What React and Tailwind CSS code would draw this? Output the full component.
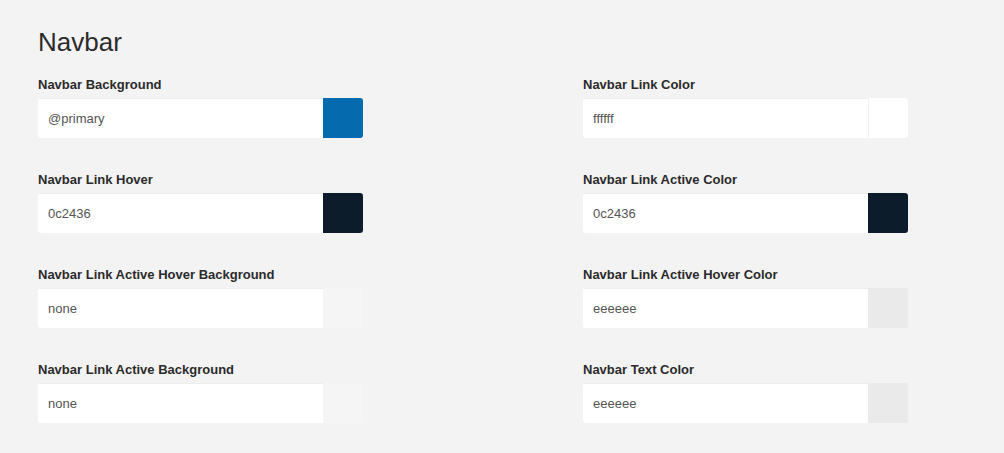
const FIELDS = [
  { label: "Navbar Background", value: "@primary", swatch: "bg-[#066aaf]" },
  { label: "Navbar Link Color", value: "ffffff", swatch: "bg-white" },
  { label: "Navbar Link Hover", value: "0c2436", swatch: "bg-[#0c1c2b]" },
  { label: "Navbar Link Active Color", value: "0c2436", swatch: "bg-[#0c1c2b]" },
  { label: "Navbar Link Active Hover Background", value: "none", swatch: "bg-[#f5f5f5]" },
  { label: "Navbar Link Active Hover Color", value: "eeeeee", swatch: "bg-[#eaeaea]" },
  { label: "Navbar Link Active Background", value: "none", swatch: "bg-[#f5f5f5]" },
  { label: "Navbar Text Color", value: "eeeeee", swatch: "bg-[#eaeaea]" },
];

function ColorField({ field }) {
  return (
    <div className="flex flex-col">
      <label className="text-[13px] font-bold text-[#2b2b2b] leading-[15px] mb-[6px] mt-[1px]">
        {field.label}
      </label>
      <div className="flex h-[40px] rounded-[3px] overflow-hidden">
        <div className="flex-1 bg-white border-t border-[#ededed] flex items-center pl-[10px] text-[13px] text-[#555]">
          {field.value}
        </div>
        <div className={`w-[40px] h-full ${field.swatch} ${field.value === "ffffff" ? "border-l border-[#f1f1f1]" : ""}`} />
      </div>
    </div>
  );
}

export default function App() {
  return (
    <div className="w-[1004px] h-[453px] bg-[#f3f3f3] font-['Liberation_Sans',Arial,sans-serif] pl-[38px] pt-[26px]">
      <h1 className="text-[26px] font-light text-[#2b2b2b] leading-[32px] mb-[18px]">Navbar</h1>
      <div className="grid grid-cols-[325px_325px] gap-x-[220px] gap-y-[33px]">
        {FIELDS.map((f) => (
          <ColorField key={f.label} field={f} />
        ))}
      </div>
    </div>
  );
}
